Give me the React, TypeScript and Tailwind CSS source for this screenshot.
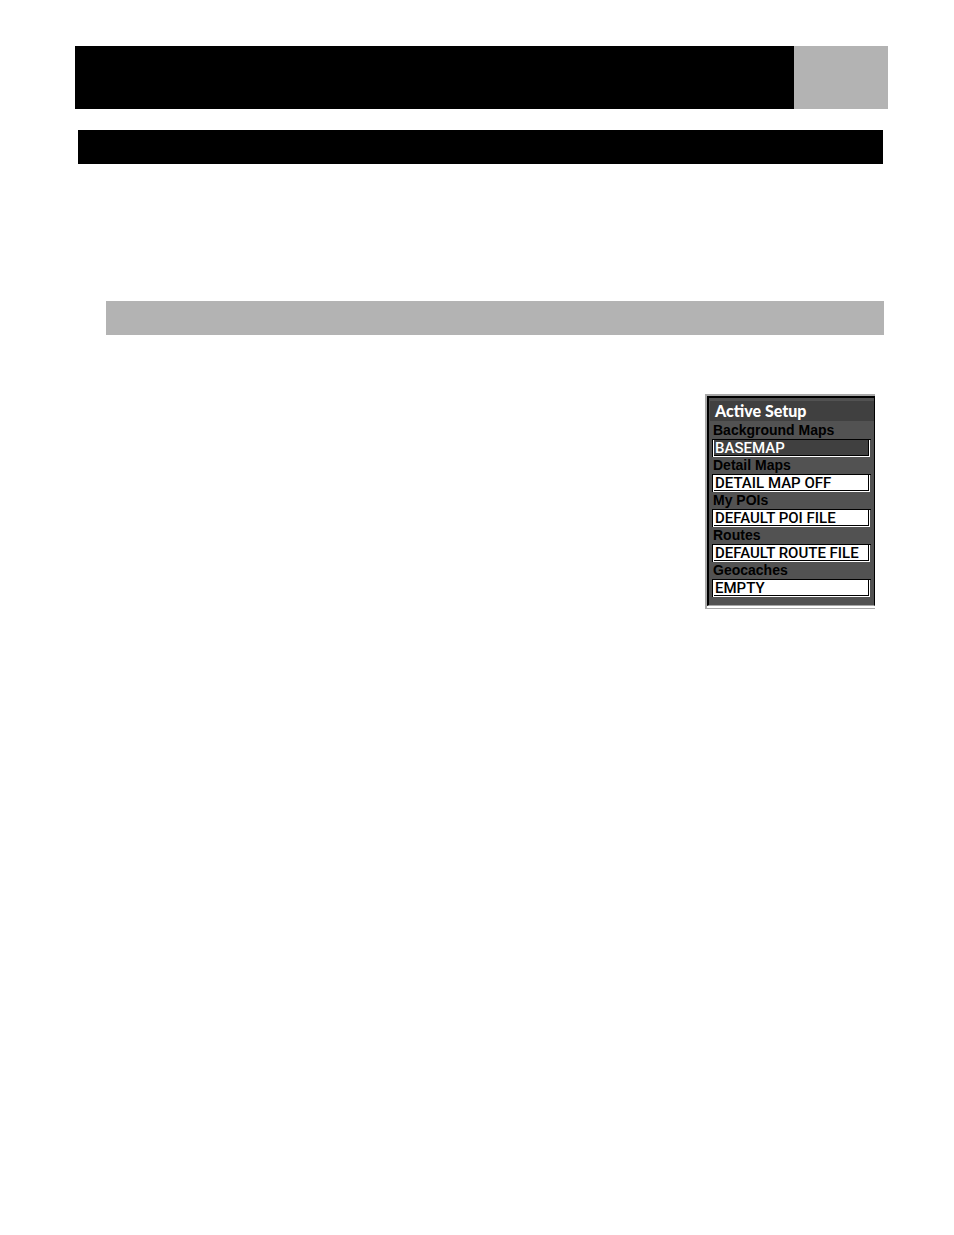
type Field = { id: string; label: string; value: string; selected?: boolean };

const fields: Field[] = [
  { id: "background-maps", label: "Background Maps", value: "BASEMAP", selected: true },
  { id: "detail-maps", label: "Detail Maps", value: "DETAIL MAP OFF" },
  { id: "my-pois", label: "My POIs", value: "DEFAULT POI FILE" },
  { id: "routes", label: "Routes", value: "DEFAULT ROUTE FILE" },
  { id: "geocaches", label: "Geocaches", value: "EMPTY" },
];

function SetupField({ id, label, value, selected }: Field) {
  return (
    <div>
      <label htmlFor={id} className="block h-[17px] pl-px text-[14px] leading-[17px] font-bold whitespace-nowrap text-black">
        {label}
      </label>
      <div className="border-t border-l border-black pr-px">
        <div className="border-r border-b border-l border-white">
          <input
            id={id}
            type="text"
            readOnly
            defaultValue={value}
            className={
              selected
                ? "block h-4 w-full border-r border-b border-black bg-[#404040] pl-px font-['Roboto','Liberation_Sans',sans-serif] text-[15px] leading-4 font-medium text-white outline-none"
                : "block h-4 w-full border-r border-b border-black bg-white pl-px font-['Roboto','Liberation_Sans',sans-serif] text-[15px] leading-4 font-medium text-black outline-none"
            }
          />
        </div>
      </div>
    </div>
  );
}

function ActiveSetup() {
  return (
    <section className="w-[170px] border-t-2 border-b border-l-2 border-[#a8a8a8]">
      <div className="border-b-2 border-white">
        <div className="border-t-2 border-r border-b border-l-2 border-t-black border-r-black border-b-[#a8a8a8] border-l-black bg-[#525252] pt-[3px] pb-2">
          <h1 className="ml-px h-5 bg-[#404040] pl-[5px] font-['Lato','Liberation_Sans',sans-serif] text-[16px] leading-5 font-black whitespace-nowrap text-white">
            Active Setup
          </h1>
          <form className="flex flex-col pt-px pr-[3px] pl-[3px]">
            {fields.map((field) => (
              <SetupField key={field.id} {...field} />
            ))}
          </form>
        </div>
      </div>
    </section>
  );
}

export default function App() {
  return (
    <main className="min-h-screen bg-white pt-[46px] pr-[66px] pl-[75px] font-['Liberation_Sans',sans-serif]">
      <header className="flex h-[63px]">
        <div className="flex-1 bg-black" />
        <div className="w-[94px] bg-[#b3b3b3]" />
      </header>
      <div className="mt-[21px] mr-[5px] ml-[3px] h-[34px] bg-black" />
      <div className="mt-[137px] mr-1 ml-[31px] h-[34px] bg-[#b3b3b3]" />
      <div className="mt-[59px] mr-[13px] flex justify-end">
        <ActiveSetup />
      </div>
    </main>
  );
}
